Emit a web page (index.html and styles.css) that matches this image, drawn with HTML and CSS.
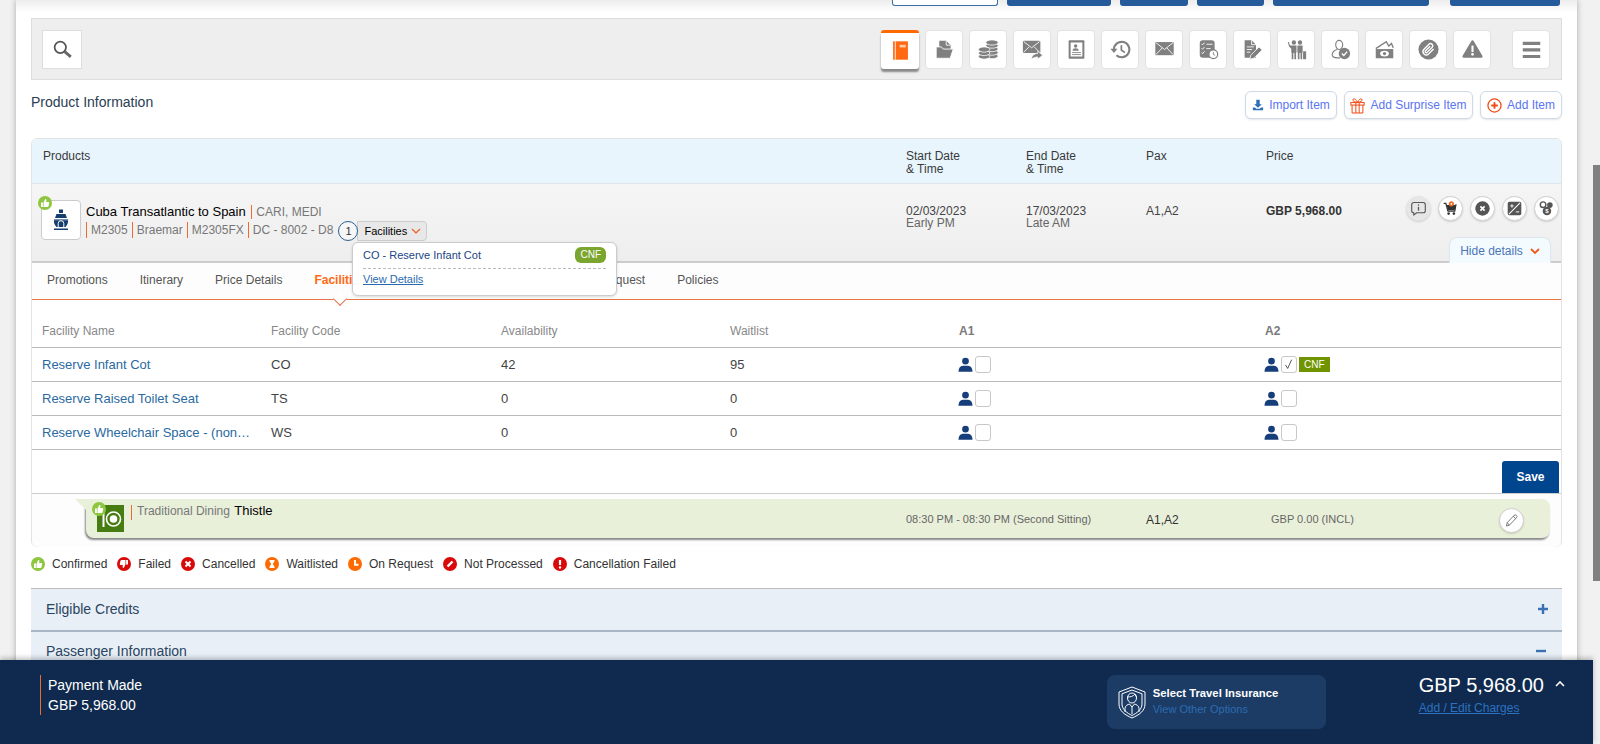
FILE: index.html
```html
<!DOCTYPE html>
<html lang="en">
<head>
    <meta charset="UTF-8">
    <meta name="viewport" content="width=device-width, initial-scale=1.0">
    <title>Booking - Product Information</title>
    <link rel="stylesheet" href="styles.css">
</head>
<body>
    <!-- shared icons -->
    <svg class="sprite">
        <symbol id="i-up" viewBox="0 0 14 14"><path fill="#fff" d="M3 6.400h1.900v4.500H3zM5.500 6.400L7.300 3c.9 0 1.300.6 1.100 1.400L8.100 6h2.300c.6 0 1 .5.8 1.100l-.7 3.100c-.1.500-.5.800-1 .8H5.500z"/></symbol>
        <symbol id="i-person" viewBox="0 0 14 14"><circle cx="7" cy="3.900" r="3.100" fill="#153e7a"/><path fill="#153e7a" d="M.5 13.800c0-3.800 1.800-5.300 4-5.600h5c2.200.3 4 1.800 4 5.600z"/></symbol>
    </svg>

    <div class="page">
        <div class="top-actions">
            <span class="top-btn top-btn-light top-w1"></span>
            <span class="top-btn top-w2"></span>
            <span class="top-btn top-w3"></span>
            <span class="top-btn top-w4"></span>
            <span class="top-btn top-w5"></span>
            <span class="top-btn top-w6"></span>
        </div>

        <div class="toolbar">
            <button class="tool tool-search">
                <svg viewBox="0 0 24 24" class="tool-ico"><circle cx="9.500" cy="9.500" r="6.500" fill="none" stroke="#555" stroke-width="2"/><path d="M14.500 14.500l7 6" stroke="#666" stroke-width="3.200" fill="none"/></svg>
            </button>
            <div class="tool-list">
                <button class="tool tool-active">
                    <svg viewBox="0 0 24 24" class="tool-ico"><rect x="3.500" y="1.500" width="17" height="21" fill="#ff6a13"/><path d="M6 1.500v21" stroke="#fff" stroke-width="1"/><rect x="11" y="5.500" width="7" height="3" fill="#ffc9a6"/></svg>
                </button>
                <button class="tool">
                    <svg viewBox="0 0 24 24" class="tool-ico"><path fill="#808080" d="M6 2h8l5 5v6H6z"/><path fill="#808080" stroke="#fff" d="M2.500 9h6l2 2.500h11.500L18.500 22h-16z"/><path d="M14 2v5h5" fill="none" stroke="#fff"/></svg>
                </button>
                <button class="tool">
                    <svg viewBox="0 0 24 24" class="tool-ico"><g fill="#808080" stroke="#fff" stroke-width=".9"><ellipse cx="16" cy="19.500" rx="7" ry="3"/><ellipse cx="16" cy="15.500" rx="7" ry="3"/><ellipse cx="16" cy="11.500" rx="7" ry="3"/><ellipse cx="16" cy="7.500" rx="7" ry="3"/><ellipse cx="16" cy="4" rx="7" ry="3"/><ellipse cx="7" cy="20" rx="6.500" ry="3"/><ellipse cx="7" cy="16" rx="6.500" ry="3"/><ellipse cx="7" cy="12" rx="6.500" ry="3"/></g></svg>
                </button>
                <button class="tool">
                    <svg viewBox="0 0 24 24" class="tool-ico"><rect x="1" y="2" width="20" height="14" rx="1.500" fill="#808080"/><path d="M2 3l9 7 9-7M2 15l6-6M20 15l-6-6" fill="none" stroke="#fff" stroke-width="1"/><path fill="#808080" stroke="#fff" stroke-width=".8" d="M11 23c0-4 3-6.500 7-6.500V14l5.500 4.500-5.500 4.500v-2.500c-3 0-5 1-7 2.500z"/></svg>
                </button>
                <button class="tool">
                    <svg viewBox="0 0 24 24" class="tool-ico"><rect x="3" y="1.500" width="18" height="21" rx="1" fill="#808080"/><rect x="5.300" y="4" width="13.400" height="16" fill="#fff"/><circle cx="11" cy="8" r="2" fill="#808080"/><path fill="#808080" d="M7.500 13.500c0-2 1.500-2.800 3.500-2.800s3.500.8 3.500 2.800z"/><path d="M7 15.500h10M7 17.800h10" stroke="#808080" stroke-width="1"/></svg>
                </button>
                <button class="tool">
                    <svg viewBox="0 0 24 24" class="tool-ico"><path d="M4.500 12a8.800 8.800 0 1 1 2.800 6.500" fill="none" stroke="#808080" stroke-width="2.400"/><path d="M.5 11h8L4.500 16z" fill="#808080"/><path d="M13 7v5.700l4 2.800" fill="none" stroke="#808080" stroke-width="2"/></svg>
                </button>
                <button class="tool">
                    <svg viewBox="0 0 24 24" class="tool-ico"><rect x="1.500" y="3.500" width="21" height="15" fill="#808080"/><path d="M2 4l10 8 10-8M2 18l7.500-8M22 18l-7.500-8" fill="none" stroke="#fff" stroke-width="1"/></svg>
                </button>
                <button class="tool">
                    <svg viewBox="0 0 24 24" class="tool-ico"><rect x="2" y="1.500" width="17" height="20" rx="3.500" fill="#808080"/><path d="M4 5.500l1.200 1.300L7.500 4M4 10.500l1.200 1.300 2.300-2.800M4 15.500l1.200 1.300 2.300-2.800M9.500 6h7M9.500 11h5" fill="none" stroke="#fff" stroke-width="1"/><circle cx="17.500" cy="17.500" r="5" fill="#fff" stroke="#808080" stroke-width="1.400"/><path d="M17.500 14.800v2.900l2 1" fill="none" stroke="#808080" stroke-width="1"/></svg>
                </button>
                <button class="tool">
                    <svg viewBox="0 0 24 24" class="tool-ico"><path fill="#808080" d="M3 1.500h8l5 5v15H3z"/><path d="M5.500 9h8M5.500 12h6M5.500 15h4" stroke="#fff" stroke-width="1"/><path d="M11 1.500v5h5" fill="none" stroke="#fff"/><path fill="#808080" stroke="#fff" stroke-width=".9" d="M9 23l1-4.500L19.500 9l3.500 3.500L13.500 22z"/></svg>
                </button>
                <button class="tool">
                    <svg viewBox="0 0 24 24" class="tool-ico"><g fill="#808080"><circle cx="9" cy="4" r="2.500"/><circle cx="16" cy="4" r="2.500"/><path d="M6 7.500h6v8h-.5V23H9.600v-7H8.400v7H6.500v-7.500H6V11L3.500 8.500 2 3.500h1.200L4.500 7z"/><path d="M13 7.500h6v8h-.5V23h-1.900v-7h-1.200v7h-1.900v-7.500H13z"/><rect x="19.500" y="14" width="3.500" height="9" rx=".6"/></g></svg>
                </button>
                <button class="tool">
                    <svg viewBox="0 0 24 24" class="tool-ico"><path d="M6.500 6.500C6.500 3.500 8.500 1.500 10.500 1.500S14.500 3.500 14.500 6.500 12.500 12 10.500 12 6.500 9.500 6.500 6.500zM8 12c-3 1-5.500 3-5.500 6 0 2 2 3.500 6 3.500h3" fill="none" stroke="#808080" stroke-width="1.300"/><circle cx="16.500" cy="16.500" r="6.500" fill="#808080"/><path d="M13.500 16.500l2.300 2.300 3.800-4.300" fill="none" stroke="#fff" stroke-width="1.500"/></svg>
                </button>
                <button class="tool">
                    <svg viewBox="0 0 24 24" class="tool-ico"><path d="M2 11L14 3l3 5 3-3 2 5" fill="none" stroke="#808080" stroke-width="1.600"/><rect x="2" y="11.500" width="20" height="10.500" fill="#808080"/><ellipse cx="12" cy="16.700" rx="5" ry="3.400" fill="#fff"/><circle cx="12" cy="16.700" r="1.900" fill="#808080"/></svg>
                </button>
                <button class="tool">
                    <svg viewBox="0 0 24 24" class="tool-ico"><circle cx="12" cy="12" r="11.500" fill="#808080"/><path d="M21.440 11.050l-9.190 9.190a6 6 0 0 1-8.490-8.490l9.190-9.190a4 4 0 0 1 5.660 5.660l-9.200 9.190a2 2 0 0 1-2.830-2.830l8.490-8.480" fill="none" stroke="#fff" stroke-width="2.500" transform="translate(4.500 4.500) scale(.62)"/></svg>
                </button>
                <button class="tool">
                    <svg viewBox="0 0 24 24" class="tool-ico"><path d="M12 3L22 20H2z" fill="#808080" stroke="#808080" stroke-width="3" stroke-linejoin="round"/><rect x="10.800" y="7.500" width="2.400" height="7.500" fill="#fff"/><circle cx="12" cy="17.500" r="1.500" fill="#fff"/></svg>
                </button>
            </div>
            <button class="tool tool-menu">
                <svg viewBox="0 0 24 24" class="tool-ico"><path d="M2 5h20M2 12.500h20M2 20h20" stroke="#808080" stroke-width="3.600"/></svg>
            </button>
        </div>

        <div class="title-row">
            <h2 class="page-title">Product Information</h2>
            <div class="title-actions">
                <a class="add-btn add-import">
                    <svg viewBox="0 0 14 14" class="add-ico"><path fill="#2f6fb5" d="M5 1h4v5h2.500L7 10.300 2.500 6H5z"/><path fill="#2f6fb5" d="M1 10h2.500l1.500 1.500h4l1.500-1.500H13v3H1z"/></svg>
                    Import Item
                </a>
                <a class="add-btn add-surprise">
                    <svg viewBox="0 0 18 20" class="add-gift"><g fill="none" stroke="#ef4b14" stroke-width="1.200"><rect x="1" y="6.500" width="16" height="3"/><path d="M2.500 9.500V19h13V9.500M7 6.500V19M11 6.500V19M9 6C7 2 4 1 3.500 3S6 6 9 6zM9 6c2-4 5-5 5.500-3S12 6 9 6z"/></g></svg>
                    Add Surprise Item
                </a>
                <a class="add-btn add-item">
                    <svg viewBox="0 0 16 16" class="add-plus"><circle cx="8" cy="8" r="7" fill="none" stroke="#ef4b14" stroke-width="1.400"/><path d="M4.500 8h7M8 4.500v7" stroke="#ef4b14" stroke-width="2"/></svg>
                    Add Item
                </a>
            </div>
        </div>

        <div class="card">
            <div class="card-head cols">
                <div>Products</div>
                <div>Start Date<br>&amp; Time</div>
                <div>End Date<br>&amp; Time</div>
                <div>Pax</div>
                <div>Price</div>
            </div>

            <div class="product cols">
                <div class="product-main">
                    <div class="ship-box">
                        <svg class="badge badge-ship" viewBox="0 0 14 14"><circle cx="7" cy="7" r="7" fill="#8dc63f"/><use href="#i-up"/></svg>
                        <svg viewBox="0 0 24 24" class="ship-ico"><path fill="#153e6f" d="M10 1.500h4V5h-4zM7.500 6h9l1.500 4H6zM5 11h14c.5 3-.5 6-2.500 8h-9C5.500 17 4.500 14 5 11z"/><path d="M9.200 19v-3.500a2.800 2.800 0 0 1 5.600 0V19" fill="none" stroke="#fff"/><path d="M5 11.800h14" stroke="#fff" stroke-width=".6"/><path fill="#153e6f" d="M5 20.500h14V22H5z"/></svg>
                    </div>
                    <div class="product-text">
                        <div class="product-title">Cuba Transatlantic to Spain <span class="product-region">CARI, MEDI</span></div>
                        <div class="product-meta">
                            <span class="meta-item">M2305</span>
                            <span class="meta-item">Braemar</span>
                            <span class="meta-item">M2305FX</span>
                            <span class="meta-item">DC - 8002 - D8</span>
                            <span class="count">1</span>
                            <span class="fac-btn">Facilities
                                <svg viewBox="0 0 10 6" class="chev"><path d="M1 1l4 4 4-4" fill="none" stroke="#ef5a1e" stroke-width="1.200"/></svg>
                            </span>
                        </div>
                    </div>
                </div>
                <div class="when">02/03/2023<span>Early PM</span></div>
                <div class="when">17/03/2023<span>Late AM</span></div>
                <div class="when">A1,A2</div>
                <div class="when price">GBP 5,968.00</div>
                <div class="row-actions">
                    <span class="circle circle-info">
                        <svg viewBox="0 0 20 20"><path d="M4.500 3h11A2.500 2.500 0 0 1 18 5.500v7a2.500 2.500 0 0 1-2.500 2.500H8l-3.500 2.500V15A2.500 2.500 0 0 1 2 12.500v-7A2.500 2.500 0 0 1 4.500 3z" fill="none" stroke="#555" stroke-width="1.300"/><path d="M10 8v4.500" stroke="#555" stroke-width="1.500"/><circle cx="10" cy="6" r=".9" fill="#555"/></svg>
                    </span>
                    <span class="circle">
                        <svg viewBox="0 0 20 20"><path d="M2 4h2.500L7 13h8l1.500-8" fill="none" stroke="#333" stroke-width="1.500"/><path fill="#333" d="M5.500 6h10.500l-1 6H7z"/><circle cx="7.800" cy="16" r="1.500" fill="#333"/><circle cx="14" cy="16" r="1.500" fill="#333"/><circle cx="11" cy="4.500" r="3" fill="#ef6a1e"/><circle cx="11" cy="4.500" r="1" fill="#fff"/></svg>
                    </span>
                    <span class="circle">
                        <svg viewBox="0 0 20 20"><circle cx="10" cy="10" r="8.500" fill="#555"/><path d="M7.500 7.500l5 5M12.500 7.500l-5 5" stroke="#fff" stroke-width="1.900"/></svg>
                    </span>
                    <span class="circle">
                        <svg viewBox="0 0 20 20"><rect x="2" y="2" width="16" height="16" rx="2" fill="#555"/><path d="M3.500 16.500L16.500 3.500" stroke="#fff" stroke-width="1.200"/><path d="M5 7h4M7 5v4M11.500 14h4" stroke="#fff" stroke-width="1.100"/></svg>
                    </span>
                    <span class="circle">
                        <svg viewBox="0 0 20 20"><circle cx="6" cy="5.500" r="3.300" fill="none" stroke="#555" stroke-width="1.700"/><circle cx="14" cy="6" r="3.300" fill="#555"/><circle cx="10.500" cy="13" r="5" fill="#555"/><text x="10.500" y="15.800" class="coin-sign">$</text></svg>
                    </span>
                </div>
                <a class="hide-tab">Hide details
                    <svg viewBox="0 0 10 6" class="chev chev-bold"><path d="M1 1l4 4 4-4" fill="none" stroke="#ef5a1e" stroke-width="1.800"/></svg>
                </a>
            </div>

            <div class="tabs">
                <a class="tab">Promotions</a>
                <a class="tab">Itinerary</a>
                <a class="tab">Price Details</a>
                <a class="tab tab-active">Facilities</a>
                <a class="tab tab-request">Special Request</a>
                <a class="tab">Policies</a>
            </div>

            <!-- popup of the facilities button -->
            <div class="popup">
                <div class="popup-top">
                    <span class="popup-name">CO - Reserve Infant Cot</span>
                    <span class="pill">CNF</span>
                </div>
                <a class="popup-link">View Details</a>
            </div>

            <table class="fac-table">
                <thead>
                    <tr>
                        <th class="c-name">Facility Name</th>
                        <th class="c-code">Facility Code</th>
                        <th class="c-num">Availability</th>
                        <th class="c-num">Waitlist</th>
                        <th class="c-a1 c-pax">A1</th>
                        <th class="c-pax">A2</th>
                    </tr>
                </thead>
                <tbody>
                    <tr>
                        <td class="c-name"><a>Reserve Infant Cot</a></td>
                        <td>CO</td>
                        <td>42</td>
                        <td>95</td>
                        <td><div class="pick"><svg class="person"><use href="#i-person"/></svg><span class="check"></span></div></td>
                        <td><div class="pick"><svg class="person"><use href="#i-person"/></svg><span class="check"><svg viewBox="0 0 16 16"><path d="M4 8.500l2.500 4L11 2.500" fill="none" stroke="#444" stroke-width="1"/></svg></span><span class="cnf-tag">CNF</span></div></td>
                    </tr>
                    <tr>
                        <td class="c-name"><a>Reserve Raised Toilet Seat</a></td>
                        <td>TS</td>
                        <td>0</td>
                        <td>0</td>
                        <td><div class="pick"><svg class="person"><use href="#i-person"/></svg><span class="check"></span></div></td>
                        <td><div class="pick"><svg class="person"><use href="#i-person"/></svg><span class="check"></span></div></td>
                    </tr>
                    <tr>
                        <td class="c-name"><a>Reserve Wheelchair Space - (non…</a></td>
                        <td>WS</td>
                        <td>0</td>
                        <td>0</td>
                        <td><div class="pick"><svg class="person"><use href="#i-person"/></svg><span class="check"></span></div></td>
                        <td><div class="pick"><svg class="person"><use href="#i-person"/></svg><span class="check"></span></div></td>
                    </tr>
                </tbody>
            </table>

            <div class="save-row">
                <button class="save-btn">Save</button>
            </div>

            <div class="sub-wrap">
                <div class="sub-item">
                    <div class="sub-main">
                        <div class="dining-ico">
                            <svg class="badge badge-dining" viewBox="0 0 14 14"><circle cx="7" cy="7" r="7" fill="#8dc63f"/><use href="#i-up"/></svg>
                            <svg viewBox="0 0 27 27"><circle cx="16.500" cy="14" r="7" fill="none" stroke="#fff" stroke-width="1.600"/><circle cx="16.500" cy="14" r="3.800" fill="#fff"/><path d="M6.500 8v14" stroke="#fff" stroke-width="2"/></svg>
                        </div>
                        <div class="sub-text"><span class="sub-type">Traditional Dining</span> <span class="sub-name">Thistle</span></div>
                    </div>
                    <div class="sub-time">08:30 PM - 08:30 PM (Second Sitting)</div>
                    <div class="sub-pax">A1,A2</div>
                    <div class="sub-price">GBP 0.00 (INCL)</div>
                    <span class="circle circle-edit">
                        <svg viewBox="0 0 20 20"><path d="M4 16.500l1-4 8-8.500a1.800 1.800 0 0 1 2.800 2.800L7.500 15.500zM5 12.500l2.500 3M12 5l3 3" fill="none" stroke="#666" stroke-width="1"/></svg>
                    </span>
                </div>
            </div>
        </div>

        <div class="legend">
            <span class="legend-item"><svg viewBox="0 0 14 14"><circle cx="7" cy="7" r="7" fill="#8dc63f"/><use href="#i-up"/></svg>Confirmed</span>
            <span class="legend-item"><svg viewBox="0 0 14 14"><circle cx="7" cy="7" r="7" fill="#d80a0a"/><g transform="rotate(180 7 7)"><use href="#i-up"/></g></svg>Failed</span>
            <span class="legend-item"><svg viewBox="0 0 14 14"><circle cx="7" cy="7" r="7" fill="#d80a0a"/><path d="M4.500 4.500l5 5M9.500 4.500l-5 5" stroke="#fff" stroke-width="2"/></svg>Cancelled</span>
            <span class="legend-item"><svg viewBox="0 0 14 14"><circle cx="7" cy="7" r="7" fill="#ff6a00"/><path fill="#fff" d="M4.500 3h5v1.500L7.700 7l1.800 2.500V11h-5V9.500L6.300 7 4.500 4.500z"/></svg>Waitlisted</span>
            <span class="legend-item"><svg viewBox="0 0 14 14"><circle cx="7" cy="7" r="7" fill="#ff6a00"/><path d="M7 3v4.800h3.500" fill="none" stroke="#fff" stroke-width="1.900"/></svg>On Request</span>
            <span class="legend-item"><svg viewBox="0 0 14 14"><circle cx="7" cy="7" r="7" fill="#d80a0a"/><path d="M4.500 9.500l5-5" stroke="#fff" stroke-width="2.400"/></svg>Not Processed</span>
            <span class="legend-item"><svg viewBox="0 0 14 14"><circle cx="7" cy="7" r="7" fill="#d80a0a"/><path d="M7 3v5" stroke="#fff" stroke-width="2.200"/><circle cx="7" cy="10.500" r="1.200" fill="#fff"/></svg>Cancellation Failed</span>
        </div>

        <div class="accordion">
            <div class="acc-item">
                <span>Eligible Credits</span>
                <svg viewBox="0 0 10 10" class="acc-ico"><path d="M0 5h10M5 0v10" stroke="#3a70b4" stroke-width="2.400"/></svg>
            </div>
            <div class="acc-item acc-open">
                <span>Passenger Information</span>
                <svg viewBox="0 0 10 10" class="acc-ico acc-minus"><path d="M0 5h10" stroke="#3a70b4" stroke-width="2.400"/></svg>
            </div>
        </div>
    </div>

    <div class="scroll-thumb"></div>

    <div class="footer">
        <div class="paid">
            <div>Payment Made</div>
            <div>GBP 5,968.00</div>
        </div>
        <div class="insurance">
            <svg viewBox="0 0 30 33" class="shield">
                <g fill="none" stroke="#fff" stroke-width="1">
                    <path d="M15 1l13 5v12c0 7-6 11-13 14C8 29 2 25 2 18V6z"/>
                    <path d="M15 4l10 3.800V18c0 5.500-5 9-10 11.500C10 27 5 23.500 5 18V7.800z"/>
                    <ellipse cx="15" cy="12" rx="4.500" ry="5"/>
                    <path d="M10.500 11c2.500 0 6-.5 7.500-3 .5 1 1 2 1.500 3M8 26v-3.500c0-3 3-4 4.500-4.500M22 26v-3.500c0-3-3-4-4.500-4.500M12.500 18l2.500 3 2.500-3M15 21v7"/>
                </g>
            </svg>
            <div class="ins-text">
                <div class="ins-title">Select Travel Insurance</div>
                <div class="ins-link">View Other Options</div>
            </div>
        </div>
        <div class="total">
            <div class="total-amount">GBP 5,968.00</div>
            <a class="total-link">Add / Edit Charges</a>
        </div>
        <svg viewBox="0 0 10 6" class="total-chev"><path d="M1 5l4-4 4 4" fill="none" stroke="#fff" stroke-width="1.600"/></svg>
    </div>
</body>
</html>
```

FILE: styles.css
```css
* {
    box-sizing: border-box;
}
html, body {
    margin: 0;
    padding: 0;
    height: 744px;
    overflow: hidden;
}
body {
    position: relative;
    font-family: "Liberation Sans", Arial, sans-serif;
    font-size: 12px;
    color: #333;
    background-color: #f1f1f1;
}
.sprite {
    display: none;
}
button {
    font-family: inherit;
    cursor: pointer;
}

/* page */
.page {
    width: 1561px;
    height: 744px;
    margin-left: 16px;
    padding: 0 15px;
    overflow: hidden;
    background: linear-gradient(#ececec, #fff 12px);
    box-shadow: 0 0 6px rgba(0, 0, 0, 0.3);
}
.top-actions {
    display: flex;
    justify-content: flex-end;
    height: 18px;
    padding-right: 2px;
}
.top-btn {
    height: 6px;
    margin-left: 9px;
    background-color: #255a9b;
    border-radius: 0 0 3px 3px;
}
.top-btn-light {
    background-color: #fff;
    border: 1px solid #3b6ea5;
    border-top: none;
}
.top-w1 { width: 106px; }
.top-w2 { width: 104px; }
.top-w3 { width: 68px; }
.top-w4 { width: 67px; }
.top-w5 { width: 156px; }
.top-w6 { width: 110px; margin-left: 21px; }

/* toolbar */
.toolbar {
    display: flex;
    align-items: center;
    height: 62px;
    padding: 0 11px 0 10px;
    background-color: #eee;
    border: 1px solid #ddd;
}
.tool-list {
    display: flex;
    gap: 6px;
    margin-left: auto;
}
.tool {
    display: flex;
    align-items: center;
    justify-content: center;
    width: 38px;
    height: 39px;
    padding: 0;
    background-color: #fff;
    border: 1px solid #e2e2e2;
    border-radius: 4px;
}
.tool-ico {
    width: 21px;
    height: 21px;
}
.tool-search {
    width: 40px;
    border: 1px solid #ddd;
    border-radius: 0;
}
.tool-active {
    border: none;
    border-top: 3px solid #ff6a00;
    border-radius: 3px;
    box-shadow: 0 3px 2px #888;
}
.tool-menu {
    margin-left: 21px;
}

/* title row */
.title-row {
    display: flex;
    justify-content: space-between;
    align-items: flex-start;
    height: 58px;
    padding-top: 11px;
}
.page-title {
    margin: 3px 0 0;
    font-size: 14px;
    font-weight: normal;
    line-height: 16px;
    color: #2a3d52;
}
.title-actions {
    display: flex;
    gap: 7px;
}
.add-btn {
    display: flex;
    align-items: center;
    justify-content: center;
    gap: 5px;
    height: 28px;
    color: #5a74f0;
    background-color: #fff;
    border: 1px solid #cddbe8;
    border-radius: 6px;
    box-shadow: 0 1px 2px rgba(0, 0, 0, 0.1);
}
.add-import { width: 92px; }
.add-surprise { width: 129px; }
.add-item { width: 82px; }
.add-ico { width: 12px; height: 12px; }
.add-gift { width: 15px; height: 17px; }
.add-plus { width: 15px; height: 15px; }

/* product card */
.card {
    position: relative;
    height: 409px;
    background-color: #fff;
    border: 1px solid #e3e3e3;
    border-radius: 6px;
}
.cols {
    display: grid;
    grid-template-columns: 863px 120px 120px 120px 140px 1fr;
    padding-left: 11px;
}
.card-head {
    height: 45px;
    padding-top: 11px;
    line-height: 13px;
    color: #3a3a3a;
    background-color: #e8f5fd;
    border-bottom: 1px solid #dfe5e9;
    border-radius: 6px 6px 0 0;
}
.product {
    position: relative;
    height: 79px;
    background: linear-gradient(#f5f5f5, #eee);
    border-bottom: 2px solid #ccc;
}
.product-main {
    display: flex;
    margin-left: -2px;
    padding-top: 16px;
}
.ship-box {
    position: relative;
    display: flex;
    align-items: center;
    justify-content: center;
    flex: none;
    width: 40px;
    height: 40px;
    background-color: #fff;
    border: 1px solid #ccc;
    border-radius: 4px;
}
.ship-ico {
    width: 24px;
    height: 24px;
}
.badge {
    position: absolute;
    width: 14px;
    height: 14px;
}
.badge-ship {
    top: -5px;
    left: -4px;
}
.product-text {
    margin: 4px 0 0 5px;
}
.product-title {
    font-size: 13px;
    line-height: 16px;
    color: #000;
}
.product-region {
    margin-left: 2px;
    padding-left: 4px;
    font-size: 12px;
    color: #777;
    border-left: 1px solid #ef6a2e;
}
.product-meta {
    display: flex;
    align-items: center;
    height: 21px;
    color: #777;
}
.meta-item {
    padding-left: 4px;
    margin-right: 4px;
    margin-bottom: 2px;
    line-height: 16px;
    border-left: 1px solid #ef6a2e;
}
.count {
    position: relative;
    z-index: 1;
    flex: none;
    width: 20px;
    height: 20px;
    margin-left: 1px;
    font-size: 11px;
    line-height: 18px;
    text-align: center;
    color: #333;
    background-color: #f4f6f8;
    border: 1px solid #2f5f8a;
    border-radius: 50%;
}
.fac-btn {
    display: flex;
    align-items: center;
    gap: 4px;
    height: 20px;
    margin-left: -1px;
    padding: 0 5px 0 6px;
    font-size: 11px;
    color: #000;
    background-color: #e8e8e8;
    border: 1px solid #ccc;
    border-radius: 0 4px 4px 0;
}
.chev {
    width: 10px;
    height: 6px;
}
.when {
    padding-top: 21px;
    line-height: 12px;
    color: #444;
}
.when span {
    display: block;
    color: #666;
}
.price {
    font-weight: bold;
    color: #333;
}
.row-actions {
    display: flex;
    gap: 7px;
    padding-top: 12px;
}
.circle {
    display: flex;
    align-items: center;
    justify-content: center;
    flex: none;
    width: 25px;
    height: 25px;
    background-color: #fff;
    border: 1px solid #d0d0d0;
    border-radius: 50%;
    box-shadow: 0 1px 2px rgba(0, 0, 0, 0.15);
}
.circle svg {
    width: 17px;
    height: 17px;
}
.circle-info {
    background-color: #e6e6e6;
    border-color: #e6e6e6;
}
.coin-sign {
    font-size: 7px;
    font-weight: bold;
    text-anchor: middle;
    fill: #fff;
}
.hide-tab {
    position: absolute;
    right: 10px;
    bottom: -2px;
    display: flex;
    align-items: center;
    justify-content: center;
    gap: 7px;
    width: 102px;
    height: 26px;
    color: #4a76b8;
    background-color: #f4fbff;
    border: 1px solid #dde6ec;
    border-bottom: none;
    border-radius: 8px 8px 0 0;
}

/* tabs */
.tabs {
    position: relative;
    display: flex;
    gap: 32px;
    height: 37px;
    padding: 10px 0 0 15px;
    background-color: #fdfdfd;
    border-bottom: 1px solid #e8744a;
}
.tab {
    line-height: 15px;
    color: #555;
}
.tab-active {
    font-weight: bold;
    color: #ff6a13;
}
.tab-active::after {
    content: "";
    position: absolute;
    left: 303px;
    bottom: -5px;
    width: 9px;
    height: 9px;
    background-color: #fff;
    border-right: 1px solid #e8744a;
    border-bottom: 1px solid #e8744a;
    transform: rotate(45deg);
}
.tab-request {
    margin-left: 160px;
}

/* popup */
.popup {
    position: absolute;
    z-index: 2;
    left: 320px;
    top: 103px;
    width: 265px;
    height: 54px;
    padding: 3px 10px 0;
    background-color: #fff;
    border: 1px solid #ccc;
    border-radius: 6px;
    box-shadow: 0 1px 3px rgba(0, 0, 0, 0.15);
}
.popup-top {
    display: flex;
    align-items: center;
    justify-content: space-between;
    height: 17px;
    padding-bottom: 5px;
    margin-bottom: 4px;
    border-bottom: 1px dashed #bbb;
    box-sizing: content-box;
}
.popup-name {
    font-size: 11px;
    color: #1a4585;
}
.pill {
    padding: 0 5px;
    font-size: 10px;
    line-height: 16px;
    color: #fff;
    background-color: #7aa52e;
    border-radius: 6px;
}
.popup-link {
    display: block;
    font-size: 11px;
    line-height: 13px;
    color: #2a6ab0;
    text-decoration: underline;
}

/* facilities table */
.fac-table {
    width: 1529px;
    border-collapse: collapse;
    table-layout: fixed;
}
.fac-table th {
    height: 47px;
    padding: 0 0 9px;
    font-weight: normal;
    text-align: left;
    vertical-align: bottom;
    color: #888;
    border-bottom: 1px solid #bbb;
}
.fac-table td {
    height: 34px;
    padding: 0;
    font-size: 13px;
    color: #444;
    border-bottom: 1px solid #bbb;
}
.fac-table a {
    color: #2a6a9f;
}
.fac-table .c-name {
    width: 239px;
    padding-left: 10px;
}
.c-code {
    width: 230px;
}
.c-num {
    width: 229px;
}
.c-a1 {
    width: 306px;
}
.fac-table .c-pax {
    font-weight: bold;
    color: #7a7a7a;
}
.pick {
    display: flex;
    align-items: center;
}
.person {
    width: 15px;
    height: 15px;
    margin-left: -1px;
}
.check {
    display: block;
    width: 16px;
    height: 17px;
    margin-left: 2px;
    background-color: #fff;
    border: 1px solid #c8c8c8;
    border-radius: 3px;
}
.check svg {
    display: block;
    width: 14px;
    height: 15px;
}
.cnf-tag {
    height: 15px;
    margin-left: 2px;
    padding: 0 5px;
    font-size: 10px;
    line-height: 15px;
    color: #fff;
    background-color: #6f9400;
}
.save-row {
    display: flex;
    justify-content: flex-end;
    height: 44px;
    padding: 11px 2px 0 0;
    border-bottom: 1px solid #ccc;
}
.save-btn {
    width: 57px;
    height: 32px;
    padding: 0;
    font-size: 12px;
    font-weight: bold;
    color: #fff;
    background-color: #00468f;
    border: none;
    border-radius: 3px 3px 0 0;
}

/* sub item */
.sub-wrap {
    height: 53px;
    padding: 5px 11px 0 54px;
    background-color: #fdfdfd;
    border-radius: 0 0 6px 6px;
}
.sub-item {
    position: relative;
    display: grid;
    grid-template-columns: 820px 240px 125px 228px 1fr;
    height: 39px;
    background-color: #e9f0da;
    border-radius: 0 8px 8px 8px;
    box-shadow: -1px 2px 2px #888;
}
.sub-item::before {
    content: "";
    position: absolute;
    left: -11px;
    top: 0;
    border-top: 11px solid #e9f0da;
    border-left: 11px solid transparent;
}
.sub-main {
    display: flex;
    padding: 6px 0 0 11px;
}
.dining-ico {
    position: relative;
    flex: none;
    width: 27px;
    height: 27px;
    background-color: #467c11;
}
.badge-dining {
    top: -3px;
    left: -5px;
}
.sub-text {
    height: 15px;
    margin-left: 7px;
    padding-left: 5px;
    line-height: 12px;
    border-left: 1px solid #ef6a2e;
}
.sub-type {
    color: #777;
}
.sub-name {
    margin-left: 1px;
    font-size: 13px;
    color: #000;
}
.sub-time, .sub-price {
    padding-top: 14px;
    font-size: 11px;
    line-height: 13px;
    color: #666;
}
.sub-pax {
    padding-top: 14px;
    line-height: 14px;
    color: #333;
}
.circle-edit {
    margin-top: 9px;
}

/* legend */
.legend {
    display: flex;
    gap: 10px;
    height: 41px;
    padding-top: 10px;
    line-height: 14px;
    color: #333;
}
.legend-item {
    display: flex;
    align-items: center;
    height: 14px;
}
.legend-item svg {
    width: 14px;
    height: 14px;
    margin-right: 7px;
}

/* accordion */
.acc-item {
    display: flex;
    align-items: center;
    justify-content: space-between;
    height: 42px;
    padding: 0 14px 2px 15px;
    font-size: 14px;
    color: #2b4560;
    background-color: #e8eff7;
    border-top: 1px solid #bbb;
}
.acc-open {
    border-top: 2px solid #a9b6c6;
}
.acc-ico {
    width: 10px;
    height: 10px;
}
.acc-minus {
    margin-right: 2px;
}

/* scrollbar thumb */
.scroll-thumb {
    position: absolute;
    top: 165px;
    right: 0;
    width: 7px;
    height: 416px;
    background-color: #808080;
}

/* bottom bar */
.footer {
    position: absolute;
    left: 0;
    bottom: 0;
    display: flex;
    align-items: flex-start;
    width: 1593px;
    height: 84px;
    padding: 15px 28px 0 0;
    color: #fff;
    background-color: #0f2a4e;
    box-shadow: 0 -2px 5px rgba(0, 0, 0, 0.25);
}
.paid {
    height: 40px;
    margin-left: 40px;
    padding-left: 7px;
    font-size: 14px;
    line-height: 20px;
    border-left: 1px solid #ef6a2e;
}
.insurance {
    display: flex;
    align-items: center;
    width: 219px;
    height: 54px;
    margin-left: auto;
    padding-left: 10px;
    background-color: #1c3c66;
    border-radius: 8px;
}
.shield {
    flex: none;
    width: 30px;
    height: 33px;
    margin-right: 6px;
}
.ins-text {
    padding-bottom: 3px;
}
.ins-title {
    font-size: 11.300px;
    font-weight: bold;
    line-height: 16px;
}
.ins-link {
    font-size: 11px;
    line-height: 16px;
    color: #2d6bb0;
}
.total {
    margin-left: 93px;
}
.total-amount {
    font-size: 20px;
    line-height: 20px;
}
.total-link {
    display: block;
    margin-top: 6px;
    line-height: 14px;
    color: #2d72c0;
    text-decoration: underline;
}
.total-chev {
    width: 10px;
    height: 6px;
    margin: 6px 0 0 11px;
}
```
